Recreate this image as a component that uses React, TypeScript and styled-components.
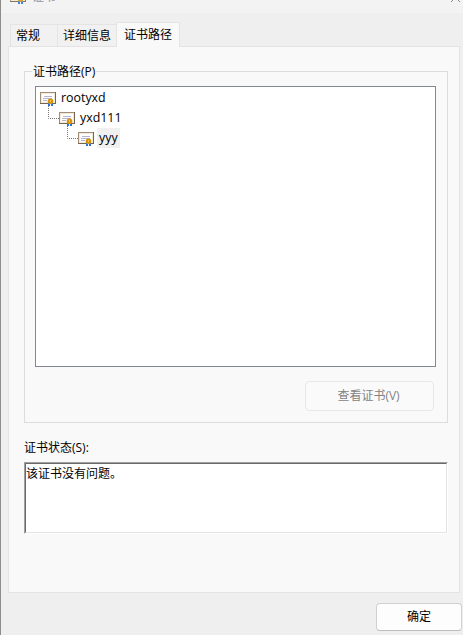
import React from "react";
import styled, { createGlobalStyle } from "styled-components";

const GlobalStyle = createGlobalStyle`
  * { box-sizing: border-box; }
  body { margin: 0; background: #efefef; overflow: hidden; }
`;

const Dialog = styled.div`
  width: 463px;
  height: 635px;
  background: #efefef;
  border-left: 1px solid #8f8b8b;
  font: 12px/16px "Open Sans", "Noto Sans CJK SC", sans-serif;
  color: #000;
  overflow: hidden;
`;

const TitleBar = styled.header`
  height: 13px;
  padding: 0 2px 0 9px;
  background: #f3f3f3;
  display: flex;
  align-items: flex-start;
  color: #969696;
`;

const TitleIcon = styled.span`
  height: 16px;
  margin-top: -12px;
  opacity: 0.85;
`;

const TitleText = styled.span`
  margin: -11px auto 0 6px;
`;

const CloseIcon = styled.svg`
  margin-top: -8px;
`;

const TabList = styled.div`
  height: 33px;
  padding-left: 9px;
  display: flex;
  align-items: flex-end;
`;

const Tab = styled.button<{ $width: number; $active?: boolean }>`
  width: ${(p) => p.$width}px;
  height: ${(p) => (p.$active ? 25 : 22)}px;
  margin: 0 0 ${(p) => (p.$active ? -1 : 0)}px ${(p) => (p.$active ? -1 : 0)}px;
  padding: ${(p) => (p.$active ? "3px 0 0 7px" : "2px 0 0 5px")};
  border: 1px solid #e4e4e4;
  border-bottom: 0;
  border-right-width: ${(p) => (p.$active ? 1 : 0)}px;
  border-radius: ${(p) => (p.$active ? "1px 1px 0 0" : "0")};
  background: ${(p) => (p.$active ? "#f9f9f9" : "#f1f1f1")};
  font: inherit;
  line-height: 18px;
  color: inherit;
  text-align: left;
  white-space: nowrap;
  display: flex;
  align-items: flex-start;
  z-index: ${(p) => (p.$active ? 1 : 0)};
`;

const Page = styled.main`
  width: 452px;
  height: 547px;
  margin-left: 7px;
  padding: 16px 12px 0 15px;
  border: 1px solid #e3e3e3;
  background: #f9f9f9;
`;

const Group = styled.fieldset`
  width: 424px;
  height: 360px;
  margin: 0;
  padding: 7px 0 0 10px;
  border: 1px solid #dcdcdc;
  min-width: 0;
`;

const Legend = styled.legend`
  height: 16px;
  margin-left: -3px;
  padding: 0 1px;
  line-height: 18px;
`;

const Tree = styled.div`
  width: 401px;
  height: 281px;
  padding: 1px 0 0 4px;
  border: 1px solid #828790;
  background: #fff;
`;

const TreeRow = styled.div<{ $level: number }>`
  height: 20px;
  padding-left: ${(p) => p.$level * 19}px;
  display: flex;
  align-items: center;
`;

const IconCell = styled.span`
  position: relative;
  width: 16px;
  height: 16px;
  flex: none;
`;

const Branch = styled.svg`
  position: absolute;
  left: -11px;
  top: -4px;
`;

const NodeLabel = styled.span<{ $selected?: boolean }>`
  height: 20px;
  margin-left: 3px;
  padding: 1px 2px 0;
  background: ${(p) => (p.$selected ? "#f0f0f0" : "transparent")};
  font-size: 12.4px;
  line-height: 18px;
`;

const Button = styled.button<{ $primary?: boolean }>`
  display: flex;
  align-items: center;
  justify-content: center;
  width: ${(p) => (p.$primary ? 86 : 129)}px;
  height: ${(p) => (p.$primary ? 28 : 30)}px;
  margin: ${(p) => (p.$primary ? "10px 0 0 375px" : "14px 0 0 270px")};
  padding: ${(p) => (p.$primary ? "0" : "0 2px 0 0")};
  border: 1px solid ${(p) => (p.$primary ? "#d0d0d0" : "#e8e8e8")};
  border-bottom-color: ${(p) => (p.$primary ? "#bdbdbd" : "#e8e8e8")};
  border-radius: 4px;
  background: ${(p) => (p.$primary ? "#fdfdfd" : "#fafafa")};
  color: ${(p) => (p.$primary ? "#000" : "#838383")};
  font: inherit;
`;

const StatusLabel = styled.div`
  height: 16px;
  margin-top: 17px;
`;

const StatusBox = styled.div`
  width: 424px;
  height: 72px;
  margin-top: 6px;
  border: 1px solid;
  border-color: #a0a0a0 #fff #fff #a0a0a0;
`;

const StatusInner = styled.div`
  height: 100%;
  padding: 2px 0;
  border: 1px solid;
  border-color: #696969 #e3e3e3 #e3e3e3 #696969;
  background: #fff;
`;

function CertificateIcon() {
  return (
    <svg width="16" height="16" viewBox="0 0 16 16" shapeRendering="crispEdges" display="block">
      <path fill="#fff" d="M0 2h16v12H0z" />
      <path fill="#a08e76" d="M0 2h16v1H0zM0 3h1v10H0z" />
      <path fill="#75634b" d="M15 2h1v12h-1zM0 13h16v1H0z" />
      <path fill="#f5ead8" d="M1 3h14v1H1zM1 4h1v9H1zM14 4h1v9h-1zM2 12h12v1H2z" />
      <path fill="#b4b4d0" d="M4 6h8v1H4zM3 8h9v1H3zM3 10h4v1H3z" />
      <path fill="#2672de" d="M8 13h2v3H8zM11 13h2v3h-2z" />
      <circle cx="10.5" cy="11.3" r="2.8" fill="#d8930d" shapeRendering="auto" />
      <path fill="#ffc545" d="M10 10h1v2h-1z" />
    </svg>
  );
}

const certificates = ["rootyxd", "yxd111", "yyy"];

export default function App() {
  return (
    <>
      <GlobalStyle />
      <Dialog>
        <TitleBar>
          <TitleIcon><CertificateIcon /></TitleIcon>
          <TitleText>证书</TitleText>
          <CloseIcon width="11" height="11" viewBox="0 0 11 11">
            <path d="M1 1l9 9M10 1l-9 9" stroke="#8b8b8b" />
          </CloseIcon>
        </TitleBar>
        <TabList>
          <Tab $width={47}>常规</Tab>
          <Tab $width={60}>详细信息</Tab>
          <Tab $width={64} $active>证书路径</Tab>
        </TabList>
        <Page>
          <Group>
            <Legend>证书路径(P)</Legend>
            <Tree>
              {certificates.map((name, level) => (
                <TreeRow key={name} $level={level}>
                  <IconCell>
                    {level > 0 && (
                      <Branch width="11" height="13" viewBox="0 0 11 13">
                        <path d="M.5 0v12.5H11" fill="none" stroke="#777" strokeDasharray="1 1" />
                      </Branch>
                    )}
                    <CertificateIcon />
                  </IconCell>
                  <NodeLabel $selected={level === 2}>{name}</NodeLabel>
                </TreeRow>
              ))}
            </Tree>
            <Button disabled>查看证书(V)</Button>
          </Group>
          <StatusLabel>证书状态(S):</StatusLabel>
          <StatusBox>
            <StatusInner>该证书没有问题。</StatusInner>
          </StatusBox>
        </Page>
        <Button $primary>确定</Button>
      </Dialog>
    </>
  );
}
